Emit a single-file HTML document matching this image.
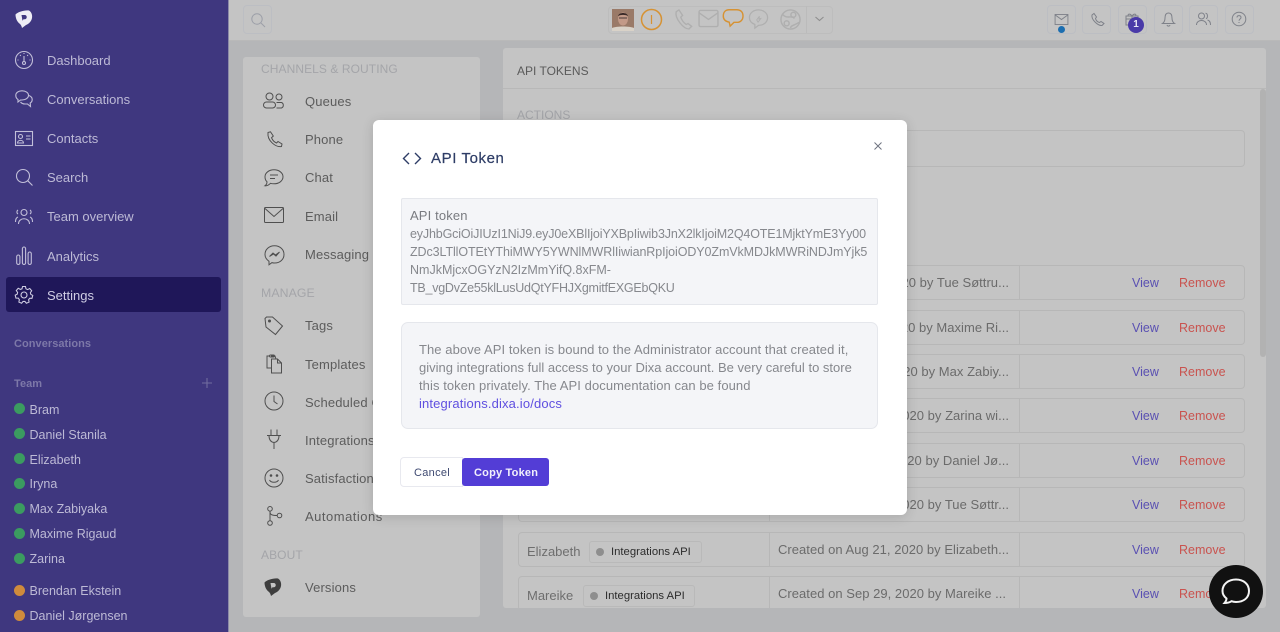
<!DOCTYPE html>
<html><head><meta charset="utf-8"><title>API Token</title>
<style>
html,body{margin:0;padding:0;width:1280px;height:632px;overflow:hidden;background:#b5b6b8}
body{font-family:"Liberation Sans",sans-serif;font-size:13px;position:relative;filter:blur(.3px)}
.a,.t,svg.i{position:absolute}
.t{white-space:nowrap;line-height:16px;letter-spacing:.14px;margin-top:1px}
svg.i{overflow:visible;fill:none}
#side{left:0;top:0;width:228px;height:632px;background:#3f377f;border-right:1px solid #8c8aa8;overflow:hidden}
#side .t{color:#bdbad6;letter-spacing:0}
#side .tm{font-size:12.5px}
#side svg.i{stroke:#c2bfd9;stroke-width:1.1}
#side .h{color:#7d78a8;font-weight:bold;font-size:11px;letter-spacing:.05px}
.d{position:absolute;left:14px;width:11px;height:11px;border-radius:50%}
.g{background:#3b9b60}.o{background:#cf8b3c}
#top{left:229px;top:0;width:1051px;height:40px;background:#c4c4c4;border-bottom:1px solid #b9b9b9}
.b{position:absolute;top:5px;width:27px;height:27px;border:1px solid #bcbec3;border-radius:4px}
#top svg.i{stroke:#7e8189;stroke-width:1}
#nav{left:243px;top:57px;width:237px;height:560px;background:#c4c4c4;border-radius:3px;overflow:hidden}
#nav .t{color:#5c5c5c}
#nav .n{color:#a4a5a9;font-size:12px;letter-spacing:.08px}
#nav svg.i{stroke:#4f4f4f;stroke-width:1}
#panel{left:503px;top:48px;width:763px;height:560px;background:#c4c4c4;border-radius:3px;overflow:hidden}
.r{position:absolute;left:15px;width:725px;height:33px;border:1px solid #b7b7b7;border-radius:4px}
.r:before,.r:after{content:"";position:absolute;top:0;bottom:0;width:1px;background:#b7b7b7}
.r:before{left:250px}.r:after{left:500px}
.c{position:absolute;right:235px;top:9px;line-height:16px;color:#6b6b6b;white-space:nowrap;letter-spacing:.03px}
.l{position:absolute;top:11px;line-height:16px;left:8px;color:#6e6e6e}
.v{position:absolute;left:613px;top:9px;line-height:16px;color:#5a50b2;font-size:12.5px}
.m{position:absolute;left:660px;top:9px;line-height:16px;color:#c9534f;font-size:12.5px}
.p{position:absolute;top:8px;height:20px;border:1px solid #b9b9b9;border-radius:3px;color:#2c2c2c;font-size:11.3px;line-height:20px;padding-left:21px;box-sizing:content-box;white-space:nowrap}
.p:before{content:"";position:absolute;left:6px;top:6px;width:8px;height:8px;border-radius:50%;background:#8e8e8e}
#modal{left:373px;top:120px;width:534px;height:395px;background:#fff;border-radius:6px;box-shadow:0 2px 12px rgba(0,0,0,.14)}
#modal .t{color:#86888d}
#modal .k{font-size:12.5px}
.box{position:absolute;left:28px;width:475px;background:#f4f5f8;border:1px solid #e5e7ec;box-sizing:content-box}
</style></head><body>

<div class="a" id="top">
  <div class="b" style="left:14px"></div>
  <svg class="i" style="left:21px;top:12px;stroke:#9c9fa8" width="16" height="16" viewBox="0 0 16 16"><circle cx="7" cy="7" r="5.2"/><path d="M11 11l4 4"/></svg>
  <div class="a" style="left:379px;top:6px;width:223px;height:26px;border:1px solid #bdbdbd;border-radius:4px"></div>
  <div class="a" style="left:577px;top:6px;width:1px;height:27px;background:#bbb"></div>
  <svg class="i" style="left:383px;top:9px" width="22" height="22" viewBox="0 0 22 22"><rect width="22" height="22" fill="#9a7a68" stroke="none"/><path d="M0 22v-3c4-2 18-2 22 0v3z" fill="#d9d2c8" stroke="none"/><ellipse cx="11" cy="10" rx="5" ry="6.5" fill="#c39a88" stroke="none"/><path d="M6 7c1-4 9-4 10 0c-3-1.500-7-1.500-10 0z" fill="#3a2a28" stroke="none"/><path d="M7 9h8" stroke="#4a3a38" stroke-width="1"/></svg>
  <svg class="i" style="left:412px;top:8.500px;stroke:#d69233;stroke-width:1.500" width="22" height="22" viewBox="0 0 22 22"><circle cx="10.500" cy="10.500" r="10"/><path d="M10.500 6v9" stroke-width="1.200"/></svg>
  <svg class="i" style="left:445px;top:9px;stroke:#afafaf;stroke-width:1.500" width="19" height="20" viewBox="0 0 20 22"><path d="M2 3l3-2 4 6-2 2c1 3 3 6 6 8l2-1 4 3-3 3C10 22 0 10 2 3z"/></svg>
  <svg class="i" style="left:469px;top:10px;stroke:#afafaf;stroke-width:1.500" width="21" height="17" viewBox="0 0 21 18"><rect x=".5" y=".5" width="20" height="17" rx="1.500"/><path d="M.5 3l10 7 10-7"/></svg>
  <svg class="i" style="left:493px;top:9px;stroke:#d69233;stroke-width:1.500" width="22" height="20" viewBox="0 0 22 21"><path d="M7 .8h8c4 0 6.500 2.500 6.500 6.500S19 14 15 14h-3l-4 4-1-4.200C3 13 .8 11 .8 7.300 .8 3.300 3 .8 7 .8z"/></svg>
  <svg class="i" style="left:519px;top:9px;stroke:#afafaf;stroke-width:1.400" width="21" height="20" viewBox="0 0 22 22"><path d="M11 1c5.500 0 10 3.500 10 8.500S16.500 18 11 18l-4 3v-4C3 15.500 1 13 1 9.500 1 4.500 5.500 1 11 1z"/><path d="M9 12l3-4-.5 3 2-.5-3 4z" stroke-width="1"/></svg>
  <svg class="i" style="left:551px;top:8.500px;stroke:#afafaf;stroke-width:1.500" width="21" height="21" viewBox="0 0 22 22"><circle cx="11" cy="11" r="10"/><circle cx="14" cy="6" r="2.600"/><circle cx="7" cy="15" r="2.600"/><path d="M3 6c4 5 10 0 12 4M11 20c0-3 5-3 9-6"/></svg>
  <svg class="i" style="left:586px;top:16px;stroke:#8e8e8e;stroke-width:1.100" width="9" height="6" viewBox="0 0 9 6"><path d="M.5 1l4 3.500 4-3.500"/></svg>

  <div class="b" style="left:818px"></div>
  <svg class="i" style="left:825px;top:14px" width="15" height="11" viewBox="0 0 15 12"><rect x=".5" y=".5" width="14" height="11"/><path d="M.5 1l7 5 7-5"/></svg>
  <div class="a" style="left:828.500px;top:25.500px;width:7px;height:7px;border-radius:50%;background:#1c6eb0"></div>
  <div class="b" style="left:853px"></div>
  <svg class="i" style="left:862px;top:13px" width="13" height="13" viewBox="0 0 13 13"><path d="M1 2l2-1.500 2.500 3.500-1 1.500c.5 2 2 3.500 4 4l1.500-1 3 2-2 2C7 13 0 6.500 1 2z"/></svg>
  <div class="b" style="left:889px"></div>
  <svg class="i" style="left:896px;top:13px" width="14" height="13" viewBox="0 0 14 13"><rect x="1" y="3" width="12" height="9"/><path d="M1 6h12M7 3v9M7 3C5 0 2 1 3.500 3M7 3c2-3 5-2 3.500 0"/></svg>
  <div class="a" style="left:899px;top:16.500px;width:16px;height:16px;border-radius:50%;background:#4a3aa8;color:#e8e6f5;font-size:10px;font-weight:bold;line-height:16px;text-align:center">1</div>
  <div class="b" style="left:925px"></div>
  <svg class="i" style="left:933px;top:12px" width="13" height="15" viewBox="0 0 13 15"><path d="M6.500 1C4 1 3 3 3 6c0 3-1 4.500-2.500 5.500h12C11 10.500 10 9 10 6c0-3-1-5-3.500-5zM5 13c.5 1.500 2.500 1.500 3 0"/></svg>
  <div class="b" style="left:960px"></div>
  <svg class="i" style="left:967px;top:12px" width="15" height="14" viewBox="0 0 15 14"><circle cx="5.500" cy="4" r="3"/><path d="M.5 13c0-6 10-6 10 0M9.500 1.200c2.500 0 2.500 5 .5 5.500M11.500 8c2 .5 3 2.500 3 5"/></svg>
  <div class="b" style="left:996px"></div>
  <svg class="i" style="left:1003px;top:12px" width="14" height="14" viewBox="0 0 14 14"><circle cx="7" cy="7" r="6.800"/><path d="M5 5.500C5 3 9 3 9 5.500 9 7 7 7 7 8.800M7 10v1"/></svg>
</div>

<div class="a" id="nav">
  <div class="t n" style="left:18px;top:3px">CHANNELS &amp; ROUTING</div>
  <svg class="i" style="left:20px;top:35px" width="22" height="17" viewBox="0 0 22 17"><circle cx="6.500" cy="4.500" r="3.500"/><rect x=".5" y="10" width="12" height="6" rx="3"/><circle cx="16" cy="5" r="3"/><path d="M13.500 10.500h5a3 3 0 0 1 0 5.500h-5"/></svg><div class="t" style="left:62px;top:35.500px">Queues</div>
  <svg class="i" style="left:23px;top:74px" width="17" height="17" viewBox="0 0 17 17"><path d="M2 1.500L4.500.8 7.300 5 5.500 6.700c1 2.500 2.500 4.300 5 5.300l1.500-1.500 4 2.500-.5 2.500C10 16.500 1 10 2 1.500z"/></svg><div class="t" style="left:62px;top:74px">Phone</div>
  <svg class="i" style="left:21px;top:112px" width="20" height="18" viewBox="0 0 20 18"><path d="M10 .8c5 0 9 3 9 7s-4 7-9 7c-1.500 0-2.500 0-3.500-.5C5 15.800 3 17 1 16.800c1.500-1 2-2.500 2-4C1.500 11.500 1 9.800 1 7.800c0-4 4-7 9-7z"/><path d="M6 6h8M6 9.500h5"/></svg><div class="t" style="left:62px;top:112px">Chat</div>
  <svg class="i" style="left:21px;top:150px" width="20" height="16" viewBox="0 0 20 16"><rect x=".5" y=".5" width="19" height="15" rx="1"/><path d="M1 1.500l9 8 9-8"/></svg><div class="t" style="left:62px;top:150.500px">Email</div>
  <svg class="i" style="left:21px;top:188px" width="21" height="21" viewBox="0 0 21 21"><path d="M10.500.8C16 .8 20 4.500 20 9.500s-4 8.500-9.500 8.500c-1 0-2-.2-2.500-.4L5 19.800v-3.500C2.500 14.500 1 12.200 1 9.500 1 4.500 5 .8 10.500.8z"/><path d="M5.500 11.500l3.500-3.500 2.500 2 4-3-3.500 4-2.500-2z" fill="#4f4f4f"/></svg><div class="t" style="left:62px;top:189px">Messaging</div>
  <div class="t n" style="left:18px;top:227px;font-size:12.300px">MANAGE</div>
  <svg class="i" style="left:21px;top:259px" width="20" height="20" viewBox="0 0 20 20"><path d="M1 2.500L2.500 1h6l10 9-7 8.500L2 11z"/><circle cx="5.500" cy="5" r="1" fill="#4f4f4f"/></svg><div class="t" style="left:62px;top:260px">Tags</div>
  <svg class="i" style="left:23px;top:297px" width="17" height="20" viewBox="0 0 17 20"><path d="M5 14H1V2h3M5 2h4l1 3"/><rect x="3.500" y="1" width="5" height="2" rx="1"/><path d="M5.500 5h6l4 4v10h-10z"/><path d="M11.500 5v4h4"/></svg><div class="t" style="left:62px;top:298.500px">Templates</div>
  <svg class="i" style="left:21px;top:334px" width="20" height="20" viewBox="0 0 20 20"><circle cx="10" cy="10" r="9"/><path d="M10 4.500V10.500l3.500 2.500"/></svg><div class="t" style="left:62px;top:336.500px">Scheduled Conversations</div>
  <svg class="i" style="left:23px;top:372px" width="16" height="21" viewBox="0 0 16 21"><path d="M5 .5v6M11 .5v6M1 6.500h14M3 6.500c0 4 1.500 6.500 5 7 3.500-.500 5-3 5-7M8 13.500V20"/></svg><div class="t" style="left:62px;top:375px">Integrations</div>
  <svg class="i" style="left:21px;top:411px" width="20" height="20" viewBox="0 0 20 20"><circle cx="10" cy="10" r="9"/><circle cx="7" cy="7.500" r=".8" fill="#4f4f4f"/><circle cx="13" cy="7.500" r=".8" fill="#4f4f4f"/><path d="M5.500 12c1.500 3 7.500 3 9 0"/></svg><div class="t" style="left:62px;top:413px">Satisfaction</div>
  <svg class="i" style="left:24px;top:449px" width="17" height="20" viewBox="0 0 17 20"><circle cx="3" cy="2.800" r="2.300"/><circle cx="3" cy="17" r="2.300"/><circle cx="12.500" cy="9.500" r="2.300"/><path d="M3 5v9.800M3 6c0 3 3 3.500 7 3.500"/></svg><div class="t" style="left:62px;top:451px;letter-spacing:.5px">Automations</div>
  <div class="t n" style="left:18px;top:489px">ABOUT</div>
  <svg class="i" style="left:6px;top:511px;stroke:none" width="50" height="40" viewBox="0 0 50 40"><path d="M15.500 14.500C18 12 24 10 29 10.500C31.500 12 32.500 15 32 18C31.500 21 29 24 26 25L22 28C21.500 26 21 25 20 24C17 22 15.500 18 15.500 14.500Z" fill="#3e3e3e"/><path d="M21.500 15h3.500a2.200 2.200 0 0 1 0 4.300h-1.500l-1 1.500z" fill="#c4c4c4"/></svg><div class="t" style="left:62px;top:522px">Versions</div>
</div>

<div class="a" id="panel">
  <div class="a" style="left:0;top:40px;width:763px;height:1px;background:#b8b8b8"></div>
  <div class="t" style="left:14px;top:14px;color:#5a5a5a;font-size:12px;letter-spacing:0">API TOKENS</div>
  <div class="t" style="left:14px;top:58px;color:#a3a4a8;font-size:12px;letter-spacing:0">ACTIONS</div>
  <div class="a" style="left:757px;top:41px;width:6px;height:268px;background:#b2b2b2;border-radius:3px"></div>
  <div class="a" style="left:15px;top:82px;width:725px;height:35px;border:1px solid #b7b7b7;border-radius:4px"></div>
  <div class="r" style="top:217px"><span class="c">20 by Tue Søttru...</span><span class="v">View</span><span class="m">Remove</span></div>
  <div class="r" style="top:261.500px"><span class="c">20 by Maxime Ri...</span><span class="v">View</span><span class="m">Remove</span></div>
  <div class="r" style="top:306px"><span class="c">20 by Max Zabiy...</span><span class="v">View</span><span class="m">Remove</span></div>
  <div class="r" style="top:350px"><span class="c">2020 by Zarina wi...</span><span class="v">View</span><span class="m">Remove</span></div>
  <div class="r" style="top:395px"><span class="c">2020 by Daniel Jø...</span><span class="v">View</span><span class="m">Remove</span></div>
  <div class="r" style="top:439px"><span class="c">2020 by Tue Søttr...</span><span class="v">View</span><span class="m">Remove</span></div>
  <div class="r" style="top:484px"><span class="l">Elizabeth</span><span class="p" style="left:70px;width:90px">Integrations API</span><span class="c" style="right:auto;left:259px">Created on Aug 21, 2020 by Elizabeth...</span><span class="v">View</span><span class="m">Remove</span></div>
  <div class="r" style="top:528px"><span class="l">Mareike</span><span class="p" style="left:64px;width:89px">Integrations API</span><span class="c" style="right:auto;left:259px">Created on Sep 29, 2020 by Mareike ...</span><span class="v">View</span><span class="m">Remove</span></div>
</div>

<div class="a" id="side">
  <svg class="i" style="left:0;top:0;stroke:none" width="50" height="40" viewBox="0 0 50 40"><path d="M15.500 14.500C18 12 24 10 29 10.500C31.500 12 32.500 15 32 18C31.500 21 29 24 26 25L22 28C21.500 26 21 25 20 24C17 22 15.500 18 15.500 14.500Z" fill="#eeedf5"/><path d="M21.500 15h3.500a2.200 2.200 0 0 1 0 4.300h-1.500l-1 1.500z" fill="#3f377f"/></svg>
  <svg class="i" style="left:15px;top:51px" width="18" height="18" viewBox="0 0 18 18"><circle cx="9" cy="9" r="8.500"/><path d="M9 5v6M3.500 9h-1M14.500 9h1M5 4l.8.8M13 4l-.8.8M9 2v1"/><circle cx="9" cy="12" r="1.500"/></svg>
  <div class="t" style="left:47px;top:52px">Dashboard</div>
  <svg class="i" style="left:15px;top:90px" width="18" height="18" viewBox="0 0 18 18"><path d="M7 .8c3.500 0 6.500 1.800 6.500 4.500S10.500 10 7 10H5.500L3 12V9.500C1.500 8.700.8 7 .8 5.300.8 2.600 3.500.8 7 .8z"/><path d="M14 5.500c2 .8 3.200 2.300 3.200 4 0 1.500-.7 2.800-2 3.500l.3 3.500-3-2.500H10c-2 0-3.500-.7-4.500-2"/></svg>
  <div class="t" style="left:47px;top:91px">Conversations</div>
  <svg class="i" style="left:15px;top:131px" width="18" height="15" viewBox="0 0 18 15"><rect x=".5" y=".5" width="17" height="14"/><circle cx="5.500" cy="5.500" r="2"/><path d="M2.500 12c0-3.500 6-3.500 6 0zM11 5h4.500M11 8h4.500"/></svg>
  <div class="t" style="left:47px;top:130px">Contacts</div>
  <svg class="i" style="left:16px;top:169px" width="17" height="17" viewBox="0 0 17 17"><circle cx="7" cy="7" r="6.500"/><path d="M11.800 11.800l4.700 4.700"/></svg>
  <div class="t" style="left:47px;top:169px">Search</div>
  <svg class="i" style="left:15px;top:208px" width="18" height="17" viewBox="0 0 18 17"><circle cx="9" cy="4.500" r="3"/><path d="M3.500 16c0-7 11-7 11 0M3 2c-1.500 1-1.500 3 0 4M15 2c1.500 1 1.500 3 0 4M.5 14c0-3 1-4.500 2.500-5M17.500 14c0-3-1-4.500-2.500-5"/></svg>
  <div class="t" style="left:47px;top:208px">Team overview</div>
  <svg class="i" style="left:16px;top:246px" width="16" height="19" viewBox="0 0 16 19"><rect x=".7" y="9" width="3.200" height="9.500" rx="1.600"/><rect x="6.400" y="1" width="3.200" height="17.500" rx="1.600"/><rect x="12.100" y="6" width="3.200" height="12.500" rx="1.600"/></svg>
  <div class="t" style="left:47px;top:247.500px">Analytics</div>
  <div class="a" style="left:6px;top:277px;width:215px;height:35px;background:#1f1759;border-radius:3px"></div>
  <svg class="i" style="left:15px;top:286px;stroke:#d0cee3" width="18" height="18" viewBox="0 0 18 18"><path d="M7.500.8h3l.5 2.400 1.700.8 2.200-1.100 2 2.300-1.400 2 .5 1.800 2 1-.8 3-2.400 0-1.100 1.500.5 2.400-2.800 1.200-1.500-1.900H8l-1.500 1.900-2.800-1.200.5-2.400L3.100 12.800.7 12.800l-.8-3 2-1 .5-1.800-1.400-2 2-2.300 2.200 1.100L6.900 3.200z" transform="translate(.3 -.3) scale(.97)"/><circle cx="9" cy="9" r="3"/></svg>
  <div class="t" style="left:47px;top:287px;color:#cfcde4">Settings</div>
  <div class="t h" style="left:14px;top:335px">Conversations</div>
  <div class="t h" style="left:14px;top:375px">Team</div>
  <svg class="i" style="left:202px;top:378px;stroke:#716c9f" width="10" height="10" viewBox="0 0 10 10"><path d="M5 0v10M0 5h10"/></svg>
  <span class="d g" style="top:403px"></span><div class="t tm" style="left:29.500px;top:400.500px">Bram</div>
  <span class="d g" style="top:428px"></span><div class="t tm" style="left:29.500px;top:425.500px">Daniel Stanila</div>
  <span class="d g" style="top:453px"></span><div class="t tm" style="left:29.500px;top:450.500px">Elizabeth</div>
  <span class="d g" style="top:478px"></span><div class="t tm" style="left:29.500px;top:475px">Iryna</div>
  <span class="d g" style="top:503px"></span><div class="t tm" style="left:29.500px;top:500px">Max Zabiyaka</div>
  <span class="d g" style="top:528px"></span><div class="t tm" style="left:29.500px;top:525px">Maxime Rigaud</div>
  <span class="d g" style="top:553px"></span><div class="t tm" style="left:29.500px;top:550px">Zarina</div>
  <span class="d o" style="top:585px"></span><div class="t tm" style="left:29.500px;top:582px">Brendan Ekstein</div>
  <span class="d o" style="top:610px"></span><div class="t tm" style="left:29.500px;top:607px">Daniel Jørgensen</div>
</div>

<div class="a" id="modal">
  <svg class="i" style="left:29px;top:32px;stroke:#2e3d66;stroke-width:1.400" width="20" height="13" viewBox="0 0 20 13"><path d="M7 1L1.500 6.500 7 12M13 1l5.500 5.500L13 12"/></svg>
  <div class="t" style="left:58px;top:30px;color:#2e3d66;font-size:15px;letter-spacing:.6px;-webkit-text-stroke:.2px #2e3d66">API Token</div>
  <svg class="i" style="left:501px;top:22px;stroke:#6f7480;stroke-width:1" width="8" height="8" viewBox="0 0 8 8"><path d="M.5.500l7 7M7.500.500l-7 7"/></svg>
  <div class="box" style="top:78px;height:105px;border-radius:2px"></div>
  <div class="t" style="left:37px;top:87px;color:#797b80">API token</div>
  <div class="t k" style="left:37px;top:105px;letter-spacing:-.15px">eyJhbGciOiJIUzI1NiJ9.eyJ0eXBlIjoiYXBpIiwib3JnX2lkIjoiM2Q4OTE1MjktYmE3Yy00</div>
  <div class="t k" style="left:37px;top:123px;letter-spacing:-.09px">ZDc3LTllOTEtYThiMWY5YWNlMWRlIiwianRpIjoiODY0ZmVkMDJkMWRiNDJmYjk5</div>
  <div class="t k" style="left:37px;top:141px;letter-spacing:0">NmJkMjcxOGYzN2IzMmYifQ.8xFM-</div>
  <div class="t k" style="left:37px;top:159px;letter-spacing:-.24px">TB_vgDvZe55klLusUdQtYFHJXgmitfEXGEbQKU</div>
  <div class="box" style="top:202px;height:105px;border-radius:7px"></div>
  <div class="t" style="left:46px;top:221px;letter-spacing:.07px">The above API token is bound to the Administrator account that created it,</div>
  <div class="t" style="left:46px;top:239px;letter-spacing:.01px">giving integrations full access to your Dixa account. Be very careful to store</div>
  <div class="t" style="left:46px;top:256.500px;letter-spacing:.07px">this token privately. The API documentation can be found</div>
  <div class="t" style="left:46px;top:274.500px;color:#5f4fe0">integrations.dixa.io/docs</div>
  <div class="a" style="left:27px;top:337px;width:61px;height:28px;border:1px solid #e8e9ef;border-radius:4px 0 0 4px"></div>
  <div class="t" style="left:41px;top:344px;color:#3f4a72;font-size:11px;letter-spacing:.3px">Cancel</div>
  <div class="a" style="left:89px;top:338px;width:87px;height:28px;background:#533dd6;border-radius:3px"></div>
  <div class="t" style="left:101px;top:344px;color:#f2f0fc;font-size:11px;font-weight:bold;letter-spacing:.2px">Copy Token</div>
</div>

<svg class="i" style="left:1209px;top:565px" width="54" height="53" viewBox="0 0 54 53"><ellipse cx="27" cy="26.500" rx="27" ry="26.500" fill="#111"/><path d="M27 14.500c7.500 0 13 4.500 13 11.500s-5.500 11-13 11c-2 0-3-.2-4.500-.8-1.500 1-4 1.800-7 1.800 1-1.200 2-3 2-4.500-2.500-2-4-4.500-4-7.500 0-7 6-11.500 13.500-11.500z" stroke="#f4f4f4" stroke-width="2"/></svg>
</body></html>
